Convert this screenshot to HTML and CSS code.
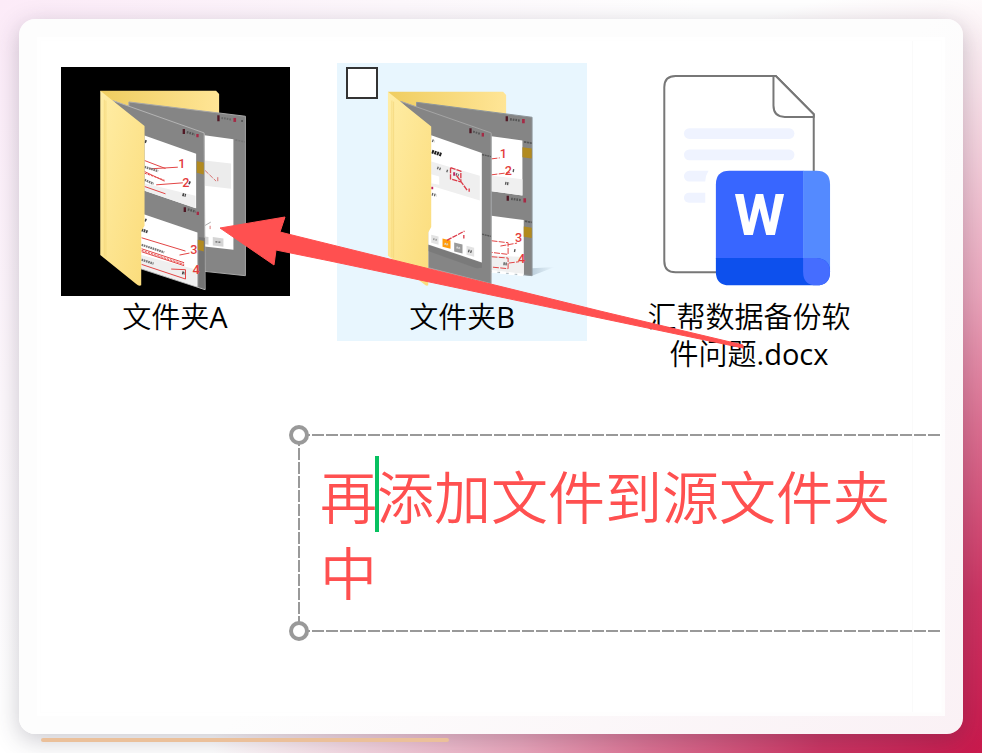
FILE: index.html
```html
<!DOCTYPE html>
<html lang="zh-CN">
<head>
    <meta charset="UTF-8">
    <title>添加文件到源文件夹</title>
    <link rel="stylesheet" href="styles.css">
</head>
<body>

<main class="window">
    <div class="canvas">

        <!--文件列表-->
        <div class="files">
            <figure class="file">
                <svg class="file_icon dark" viewBox="34 37 688 688" aria-hidden="true">
                    <defs>
                        <linearGradient id="cover" x1="0" y1="0" x2="1" y2="1">
                            <stop offset="0" stop-color="#ffeda5"/>
                            <stop offset="1" stop-color="#fbdc7b"/>
                        </linearGradient>
                        <linearGradient id="back" x1="0" y1="0" x2="1" y2="0">
                            <stop offset="0" stop-color="#efcd60"/>
                            <stop offset="1" stop-color="#ffe596"/>
                        </linearGradient>
                    </defs>
                    <path fill="url(#back)" d="M152 108H500L509 118V260H200Z"/>
                    <!--后面一页-->
                    <path fill="#858585" stroke="#a8a8a8" stroke-width="3" d="M238 142L588 185V664L465 651V240L238 180Z"/>
                    <path fill="#fff" d="M465 242L552 254V586L465 576Z"/>
                    <path fill="#ececec" d="M465 318L545 327V403L465 394Z"/>
                    <path fill="#d5d5d5" d="M465 546L477 548V571L465 569ZM490 548L522 552V577L490 573Z"/>
                    <path stroke="#777" stroke-width="5" stroke-dasharray="6 3" d="M498 562L516 564M558 256L586 262"/>
                    <path stroke="#aaa" stroke-width="3" d="M467 513L484 503"/>
                    <path stroke="#c33" stroke-width="2" fill="none" stroke-dasharray="14 4" d="M467 348L500 380M505 368V380M482 514V524"/>
                    <path stroke="#501824" stroke-width="7" d="M507 182V200"/>
                    <path stroke="#666" stroke-width="6" stroke-dasharray="5 3" d="M516 190L548 195"/>
                    <path stroke="#a52a45" stroke-width="8" d="M556 190V202"/>
                    <path stroke="#555" stroke-width="5" d="M578 196V202"/>
                    <!--前面一页-->
                    <path fill="#858585" stroke="#b4b4b4" stroke-width="3" d="M190 138L464 235L467 706L270 642V230Z"/>
                    <path fill="#747474" d="M448 548L466 550V704L448 698Z"/>
                    <path fill="#fff" d="M285 243L440 298V461L285 409ZM285 480L444 534V697L270 640V480Z"/>
                    <path fill="#efefef" d="M285 386L438 424V461L285 409ZM270 600L442 646V696L270 640Z"/>
                    <path fill="#b18a20" d="M442 320L463 324V360L442 355ZM445 556L463 560V591L445 586Z"/>
                    <path stroke="#e24444" stroke-width="3" fill="none" d="M285 318L348 342M300 343L385 338M285 351L345 380M320 391L400 385M285 396L348 418M276 550L408 590M276 583L404 625M276 592L404 634M390 602L420 596M365 644L408 646V674L276 630"/>
                    <path stroke="#e24444" stroke-width="3" stroke-dasharray="7 3" d="M285 356L345 377M276 588L404 630"/>
                    <path stroke="#777" stroke-width="7" stroke-dasharray="5 2" d="M285 337L326 350M285 376L312 388M276 571L344 594M276 616L312 628"/>
                    <path stroke="#444" stroke-width="9" stroke-dasharray="5 2" d="M276 526L296 533M286 496L291 498M286 260L291 262M399 420L409 423M418 384L423 386M398 655L406 657"/>
                    <path stroke="#501824" stroke-width="7" d="M403 223V238M406 458V473"/>
                    <path stroke="#555" stroke-width="7" stroke-dasharray="5 3" d="M412 233L436 240M415 465L439 472"/>
                    <path stroke="#a52a45" stroke-width="7" d="M444 238V248M445 472V482"/>
                    <g class="mark">
                        <text x="386" y="341">1</text>
                        <text x="398" y="397">2</text>
                        <text x="422" y="598">3</text>
                        <text x="429" y="658">4</text>
                    </g>
                    <path fill="url(#cover)" d="M152 108L285 214V514L275 530V693Q268 697 260 689L152 602Z"/>
                    <path stroke="#f1d477" stroke-width="2" d="M164 135V606M169 138V609"/>
                </svg>
                <figcaption>文件夹<span>A</span></figcaption>
            </figure>

            <figure class="file selected">
                <input class="check" type="checkbox" aria-label="选择文件夹B">
                <svg class="file_icon" viewBox="54 37 688 688" aria-hidden="true">
                    <defs>
                        <linearGradient id="shade" x1="0" y1="0" x2="1" y2="0">
                            <stop offset="0" stop-color="#9fb4c4"/>
                            <stop offset="1" stop-color="#e8f6fe"/>
                        </linearGradient>
                    </defs>
                    <path fill="url(#shade)" opacity=".6" d="M607 642L675 638L607 664Z"/>
                    <path fill="url(#back)" d="M174 111H520L529 121V260H220Z"/>
                    <!--后面一页-->
                    <path fill="#858585" stroke="#8f979c" stroke-width="3" d="M260 143L607 188V664L485 651V240L260 180Z"/>
                    <path fill="#fff" d="M485 245L578 258V423L485 410ZM485 484L582 497V661L485 650Z"/>
                    <path fill="#f0f0f0" d="M485 364L578 374V423L485 410ZM485 603L582 608V661L485 650Z"/>
                    <path fill="#b18a20" d="M578 278L606 282V312L578 308ZM582 516L606 520V551L582 547Z"/>
                    <path stroke="#e24444" stroke-width="3" fill="none" stroke-dasharray="18 4" d="M485 313L510 310M485 361L540 354M485 559L535 565V600L485 594M512 575L562 566M485 607L535 611V643L485 638M537 626L568 622"/>
                    <path stroke="#555" stroke-width="9" stroke-dasharray="4 2" d="M526 386L538 388M549 348L555 349M553 588L558 589M521 628L533 629"/>
                    <path stroke="#fff" stroke-width="8" stroke-dasharray="18 8" d="M485 651L582 662"/>
                    <path stroke="#501824" stroke-width="7" d="M531 185V200M534 424V439"/>
                    <path stroke="#555" stroke-width="7" stroke-dasharray="5 3" d="M541 194L571 198M544 433L574 437"/>
                    <path stroke="#a52a45" stroke-width="8" d="M581 193V206M585 431V444"/>
                    <path stroke="#555" stroke-width="5" stroke-dasharray="7 2" d="M583 262L606 266M586 500L606 504"/>
                    <g class="mark">
                        <text x="510" y="310">1</text>
                        <text x="525" y="362">2</text>
                        <text x="556" y="564">3</text>
                        <text x="565" y="627">4</text>
                    </g>
                    <!--前面一页-->
                    <path fill="#858585" stroke="#a5a5a5" stroke-width="3" d="M212 140L484 235V688L295 640V230Z"/>
                    <path fill="#707070" opacity=".5" d="M295 572L456 626V640L440 642L295 590Z"/>
                    <path fill="#fff" d="M304 242L456 295V624L295 570V500Z"/>
                    <path fill="#efefef" d="M304 321L450 364V438L304 394Z"/>
                    <path fill="#fff" d="M304 359L328 366V391L304 386Z"/>
                    <path fill="#e3e3e3" d="M304 541L326 546V571L304 565ZM410 574L433 580V607L410 601Z"/>
                    <path fill="#ff9c0b" d="M338 552L362 558V583L338 577Z"/>
                    <path fill="#9a9a9a" d="M373 564L398 570V597L373 591Z"/>
                    <path stroke="#555" stroke-width="8" stroke-dasharray="4 3" d="M415 589L428 593"/>
                    <path stroke="#ddd" stroke-width="6" stroke-dasharray="4 2" d="M380 579L392 582M344 568L356 571"/>
                    <path stroke="#999" stroke-width="6" stroke-dasharray="4 3" d="M310 554L322 557"/>
                    <path stroke="#222" stroke-width="11" stroke-dasharray="6 2" d="M306 291L336 301"/>
                    <path stroke="#666" stroke-width="8" stroke-dasharray="4 3" d="M322 340L333 344M350 349L356 351M378 359L387 362M306 419L320 423M307 258L314 261"/>
                    <path stroke="#dc3c49" stroke-width="4" fill="none" stroke-dasharray="16 3" d="M362 339L393 350V382L362 373ZM380 363L412 407M418 402V412M351 558L404 530M402 542V552"/>
                    <path stroke="#c02562" stroke-width="6" d="M373 353V364M307 397V404"/>
                    <path stroke="#501824" stroke-width="7" d="M422 221V236"/>
                    <path stroke="#555" stroke-width="6" stroke-dasharray="5 3" d="M430 231L452 238"/>
                    <path stroke="#a52a45" stroke-width="7" d="M459 235V246"/>
                    <path stroke="#555" stroke-width="4" stroke-dasharray="6 2" d="M457 300L483 306M457 539L483 546"/>
                    <path fill="url(#cover)" d="M174 111L304 216V518L295 534V693Q290 697 282 689L174 604Z"/>
                    <path stroke="#f1d477" stroke-width="2" d="M186 138V608M191 141V611"/>
                </svg>
                <figcaption>文件夹<span>B</span></figcaption>
            </figure>

            <figure class="file">
                <svg class="file_icon" viewBox="-13 21 688 688" aria-hidden="true">
                    <g fill="#fff" stroke="#777" stroke-width="6" stroke-linejoin="round">
                        <path d="M109 48H410L524 163V638H109Q75 638 75 604V82Q75 48 109 48Z"/>
                        <path d="M403 48V137Q403 171 437 171H524V163L410 48Z"/>
                    </g>
                    <g fill="#eff3ff">
                        <rect x="134" y="205" width="332" height="32" rx="16"/>
                        <rect x="134" y="269" width="332" height="32" rx="16"/>
                        <path d="M150 333H208Q198 348 198 365H150A16 16 0 0 1 150 333Z"/>
                        <path d="M149 399H198V429H149A15 15 0 0 1 149 399Z"/>
                    </g>
                    <path fill="#3866ff" d="M271 333H493V597H230V374Q230 333 271 333Z"/>
                    <path fill="#548aff" d="M492 333H532Q573 333 573 374V636L540 597H492Z"/>
                    <path fill="#0d50ed" d="M230 595H533Q573 599 573 636Q573 677 532 677H271Q230 677 230 636Z"/>
                    <path fill="#456dff" d="M492 595H533Q573 599 573 636Q573 677 532 677Q492 677 492 636Z"/>
                    <text class="word" x="361" y="525">W</text>
                </svg>
                <figcaption>汇帮数据备份软件问题<span>.docx</span></figcaption>
            </figure>

            <!--从文档指向文件夹A的箭头-->
            <svg class="arrow" width="530" height="136" viewBox="216 214 530 136" aria-hidden="true">
                <path stroke-linejoin="round" d="M220 228L285 217L280 232L300 237L600 311L743 345V348L600 318L330 261L276 250L274 265Z"/>
            </svg>
        </div>

        <!--文本框-->
        <div class="textbox">
            <textarea class="note" aria-label="说明文字" spellcheck="false">再添加文件到源文件夹中</textarea>
            <span class="caret"></span>
            <span class="handle top"></span>
            <span class="handle bottom"></span>
        </div>
    </div>
</main>
<div class="progress"></div>

</body>
</html>
```
FILE: styles.css
```css
*{
    margin: 0px;
    padding: 0px;
    box-sizing: border-box;
}
body{
    min-height: 100vh;
    display: flex;
    flex-direction: column;
    padding: 19px 19px 12px;
    background: radial-gradient(circle at 100% 100%, #c8194c 0px, #cc3462 160px, #dc7192 333px, #eaa5bb 460px, #f3cfdb 600px, rgba(255,255,255,0) 770px),
                radial-gradient(circle at 0 0, #fcebf8, #fdf8fc 400px, #ffffff 700px);
    font-family: "Open Sans", "Noto Sans CJK SC", sans-serif;
}

.window{
    flex: 1;
    display: flex;
    padding: 22px;
    border-radius: 16px;
    background: linear-gradient(135deg, #fdfdfd 55%, #faf1f5);
    box-shadow: 0 6px 24px rgba(50, 45, 70, 0.26);
}
.canvas{
    flex: 1;
    min-width: 0;
    background: linear-gradient(#fafafa, #fafafa) right 28px top 0 / 1px 100% no-repeat #fff;
    outline: 4px solid rgba(255, 255, 255, 0.8);
    box-shadow: 0 0 0 1px #f8f8f8;
}

.files{
    position: relative;
    display: flex;
    gap: 37px;
    padding: 22px 0 0 9px;
}
.file{
    position: relative;
    width: 250px;
    height: 278px;
    padding-top: 4px;
    text-align: center;
    flex-shrink: 0;
}
.selected{
    background-color: #e8f6fe;
}
.file_icon{
    display: block;
    width: 229px;
    height: 229px;
    margin: 0 auto;
}
.dark{
    background-color: #000;
}
.file figcaption{
    padding: 2px 20px 0;
    font-size: 29px;
    font-weight: 350;
    line-height: 37px;
    color: #000;
}
.file figcaption span{
    font-weight: 400;
}
.check{
    position: absolute;
    left: 9px;
    top: 4px;
    width: 32px;
    height: 32px;
    appearance: none;
    border: 2px solid #333;
    background-color: #fff;
}
.mark text{
    fill: #e33d3d;
    font-size: 38px;
    font-weight: 500;
    font-family: Roboto, sans-serif;
}
.word{
    fill: #fff;
    font-size: 175px;
    font-weight: 700;
    font-family: Roboto, sans-serif;
    text-anchor: middle;
}
/*箭头盖在图标上面*/
.arrow{
    position: absolute;
    left: 175px;
    top: 173px;
    fill: #ff5050;
    stroke: #ff5050;
    stroke-width: 1px;
    pointer-events: none;
}

/*虚线边框，右边超出画布*/
.textbox{
    position: relative;
    margin: 93px 0 80px 257px;
    height: 198px;
    padding: 22px 24px 0 22px;
    background: repeating-linear-gradient(90deg, #999 0 12px, transparent 12px 14px) top / 100% 2px no-repeat,
                repeating-linear-gradient(90deg, #999 0 12px, transparent 12px 14px) bottom / 100% 2px no-repeat,
                repeating-linear-gradient(180deg, #999 0 12px, transparent 12px 14px) left / 2px 100% no-repeat;
}
.note{
    display: block;
    width: 100%;
    height: 156px;
    border: none;
    outline: none;
    resize: none;
    overflow: hidden;
    background: transparent;
    color: #ff5050;
    font-family: "Noto Sans CJK SC", sans-serif;
    font-size: 57px;
    font-weight: 350;
    line-height: 76px;
}
.caret{
    position: absolute;
    left: 77px;
    top: 22px;
    width: 4px;
    height: 76px;
    background-color: #07c160;
}
.handle{
    position: absolute;
    left: -9px;
    width: 20px;
    height: 20px;
    border: 4px solid #999;
    border-radius: 50%;
    background-color: #fff;
}
.top{
    top: -9px;
}
.bottom{
    bottom: -9px;
}

.progress{
    width: 408px;
    height: 4px;
    margin: 4px 0 0 22px;
    border-radius: 2px;
    background-color: #ebc09a;
}
```
